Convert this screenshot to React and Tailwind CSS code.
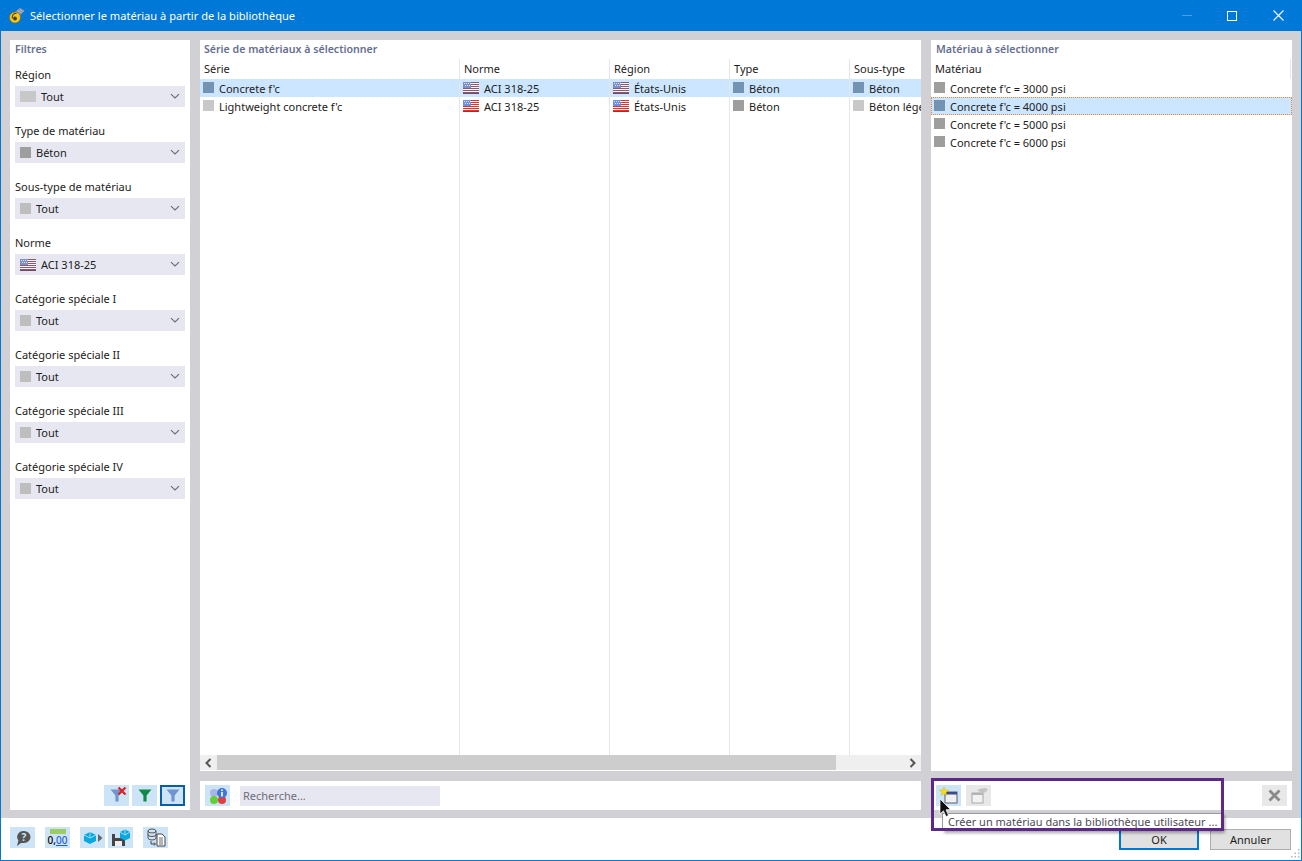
const font = { fontFamily: '"Noto Sans", "Open Sans", sans-serif' }

function Swatch({ color, className = '' }) {
  return <span className={`block w-[11px] h-[11px] shrink-0 ${className}`} style={{ background: color }} />
}

function Flag({ muted }) {
  const stripes = [0, 2, 4, 6, 8, 10]
  return (
    <svg width="16" height="12" viewBox="0 0 16 12" className="shrink-0 block">
      <rect width="16" height="12" fill="#f4f4f4" />
      {stripes.map((y) => <rect key={y} x="0" y={y} width="16" height="1" fill={muted ? '#8a5a72' : '#e0352f'} />)}
      <rect x="0" y="11" width="16" height="1" fill={muted ? '#6f4a66' : '#c8201c'} />
      <rect width="8" height="6" fill={muted ? '#7d8fc4' : '#6f8fe0'} />
      {[1, 3, 5, 7].map((x) => <rect key={x} x={x} y="1" width="1" height="1" fill="#dfe6fa" />)}
      {[2, 4, 6].map((x) => <rect key={x} x={x} y="3" width="1" height="1" fill="#dfe6fa" />)}
    </svg>
  )
}

function Chevron() {
  return (
    <svg width="12" height="7" viewBox="0 0 12 7" className="block">
      <path d="M2 1.2 L6 5 L10 1.2" fill="none" stroke="#6a6b73" strokeWidth="1.1" />
    </svg>
  )
}

function Filter({ label, value, icon }) {
  return (
    <div className="h-[56px]">
      <div className="h-[21px] pt-[2px] text-[11px] leading-[16px] text-[#1c1c20]">{label}</div>
      <div className="h-[21px] bg-[#e7e7f1] flex items-center pl-[5px] pr-[4px] text-[11px] text-[#1c1c20]">
        {icon}
        <span className="flex-1 pt-[2px]">{value}</span>
        <Chevron />
      </div>
    </div>
  )
}

const grey = <Swatch color="#bebebe" className="mr-[5px]" />

function Funnel({ color }) {
  return (
    <svg width="14" height="13" viewBox="0 0 14 13" className="block">
      <path d="M0.5 0.5 H13.5 L8.6 6.5 V12.5 H5.4 V6.5 Z" fill={color} />
    </svg>
  )
}

function ToolBtn({ children, active, className = '' }) {
  return (
    <div className={`w-[25px] h-[21px] flex items-center justify-center bg-[#cde4f7] ${active ? 'border-2 border-[#0a5ea8]' : ''} ${className}`}>
      {children}
    </div>
  )
}

function Cell({ w, border = true, children }) {
  return (
    <div className={`shrink-0 flex items-center h-full pl-[3px] gap-[5px] overflow-hidden whitespace-nowrap ${border ? 'border-r border-[#e6e6e6]' : ''}`} style={{ width: w }}>
      {children}
    </div>
  )
}

const cols = [260, 150, 120, 120, 72]

function SeriesRow({ selected, name, sw, type, sub, subColor, typeColor, muted }) {
  return (
    <div className={`flex h-[18px] text-[11px] text-[#1c1c20] ${selected ? 'bg-[#cce6ff]' : ''}`}>
      <Cell w={cols[0]}><Swatch color={sw} className="mb-[2px]" /><span className="pt-[2px]">{name}</span></Cell>
      <Cell w={cols[1]}><Flag muted={muted} /><span className="pt-[2px]">ACI 318-25</span></Cell>
      <Cell w={cols[2]}><Flag muted={muted} /><span className="pt-[2px]">États-Unis</span></Cell>
      <Cell w={cols[3]}><Swatch color={typeColor} className="mb-[2px]" /><span className="pt-[2px]">{type}</span></Cell>
      <Cell w={cols[4]} border={false}><Swatch color={subColor} className="mb-[2px]" /><span className="pt-[2px]">{sub}</span></Cell>
    </div>
  )
}

function Column({ w, label, border = true }) {
  return (
    <div className={`shrink-0 pl-[4px] h-full flex items-center text-[11px] text-[#1c1c20] ${border ? 'border-r border-[#e6e6e6]' : ''}`} style={{ width: w }}>
      {label}
    </div>
  )
}

export default function App() {
  const bodyLines = cols.slice(0, 4)
  return (
    <div style={font} className="w-[1302px] h-[861px] relative overflow-hidden bg-white border border-[#0078d7] border-t-0 flex flex-col">
      {/* title bar */}
      <div className="h-[31px] bg-[#0078d7] flex items-center shrink-0 ml-[-1px] mr-[-1px] text-white">
        <svg width="17" height="17" viewBox="0 0 17 17" className="ml-[8px] mr-[5px] block">
          <path d="M7 5 L12 1 L16.5 3.5 L12.5 8 Z" fill="#8a93a3" />
          <path d="M9 3.5 L14 6 M11 2 L15.5 4.5" stroke="#c9ced8" strokeWidth="0.6" />
          <circle cx="7" cy="10.5" r="5.5" fill="#f2c81e" stroke="#8a6a12" strokeWidth="0.7" />
          <circle cx="7" cy="11.5" r="1.9" fill="#4f3f10" />
          <path d="M8.5 6.5 C 5 6 4 8.5 4.4 11.5" stroke="#4f3f10" strokeWidth="1.1" fill="none" />
        </svg>
        <span className="text-[11.1px] pt-[2px]">Sélectionner le matériau à partir de la bibliothèque</span>
        <div className="ml-auto flex items-center">
          <div className="w-[10px] h-[1px] bg-[#4a9fe3] mr-[35px]" />
          <div className="w-[10px] h-[10px] border border-white mr-[36px]" />
          <svg width="11" height="11" viewBox="0 0 11 11" className="mr-[18px] block">
            <path d="M0.5 0.5 L10.5 10.5 M10.5 0.5 L0.5 10.5" stroke="#fff" strokeWidth="1.1" />
          </svg>
        </div>
      </div>

      {/* body */}
      <div className="h-[787px] shrink-0 bg-[#d1d0d4] flex gap-[10px] pt-[9px] pb-[8px] pl-[9px] pr-[9px]">
        {/* filters */}
        <div className="w-[180px] bg-white flex flex-col relative px-[5px]">
          <div className="h-[19px] text-[10.6px] font-semibold text-[#666f90] leading-[18px]">Filtres</div>
          <div className="mt-[6px]">
            <Filter label="Région" value="Tout" icon={<Swatch color="#c8c8c8" className="mr-[5px] !w-[16px]" />} />
            <Filter label="Type de matériau" value="Béton" icon={<Swatch color="#9e9e9e" className="mr-[5px]" />} />
            <Filter label="Sous-type de matériau" value="Tout" icon={grey} />
            <Filter label="Norme" value="ACI 318-25" icon={<span className="mr-[5px]"><Flag muted /></span>} />
            <Filter label="Catégorie spéciale I" value="Tout" icon={grey} />
            <Filter label="Catégorie spéciale II" value="Tout" icon={grey} />
            <Filter label="Catégorie spéciale III" value="Tout" icon={grey} />
            <Filter label="Catégorie spéciale IV" value="Tout" icon={grey} />
          </div>
          <div className="mt-auto mb-[4px] flex justify-end gap-[3px]">
            <ToolBtn>
              <div className="relative">
                <Funnel color="#6f94cf" />
                <svg width="10" height="10" viewBox="0 0 10 10" className="absolute top-[-3px] right-[-3px]">
                  <path d="M1.5 1.5 L8.5 8.5 M8.5 1.5 L1.5 8.5" stroke="#e02020" strokeWidth="2.2" />
                </svg>
              </div>
            </ToolBtn>
            <ToolBtn><Funnel color="#0e8a46" /></ToolBtn>
            <ToolBtn active><Funnel color="#6f94cf" /></ToolBtn>
          </div>
        </div>

        {/* series */}
        <div className="w-[721px] flex flex-col gap-[10px]">
          <div className="flex-1 bg-white flex flex-col relative overflow-hidden">
            <div className="h-[19px] pl-[4px] text-[10.6px] font-semibold text-[#666f90] leading-[18px]">Série de matériaux à sélectionner</div>
            <div className="h-[20px] flex">
              <Column w={cols[0]} label="Série" />
              <Column w={cols[1]} label="Norme" />
              <Column w={cols[2]} label="Région" />
              <Column w={cols[3]} label="Type" />
              <Column w={cols[4]} label="Sous-type" border={false} />
            </div>
            <SeriesRow selected name="Concrete f'c" sw="#7393b3" typeColor="#7393b3" type="Béton" subColor="#7393b3" sub="Béton" muted />
            <SeriesRow name="Lightweight concrete f'c" sw="#c8c8c8" typeColor="#9e9e9e" type="Béton" subColor="#c8c8c8" sub="Béton léger" />
            <div className="flex-1 flex">
              {bodyLines.map((w, i) => <div key={i} className="h-full border-r border-[#e6e6e6] shrink-0" style={{ width: w }} />)}
            </div>
            <div className="h-[15px] mb-[1px] bg-[#efefef] flex items-stretch shrink-0">
              <div className="w-[17px] flex items-center justify-center">
                <svg width="7" height="10" viewBox="0 0 7 10"><path d="M5.5 1 L1.5 5 L5.5 9" fill="none" stroke="#555" strokeWidth="2" /></svg>
              </div>
              <div className="w-[619px] bg-[#cdcdcd]" />
              <div className="flex-1" />
              <div className="w-[17px] flex items-center justify-center">
                <svg width="7" height="10" viewBox="0 0 7 10"><path d="M1.5 1 L5.5 5 L1.5 9" fill="none" stroke="#555" strokeWidth="2" /></svg>
              </div>
            </div>
          </div>
          <div className="h-[29px] bg-white flex items-center pl-[5px] gap-[10px] shrink-0">
            <ToolBtn>
              <svg width="20" height="18" viewBox="0 0 20 18" className="block">
                <circle cx="6" cy="6" r="4" fill="#a9b4e6" />
                <circle cx="6" cy="13" r="4" fill="#62cf3a" />
                <circle cx="14" cy="13" r="4" fill="#e04040" />
                <circle cx="14" cy="6" r="5" fill="#3f74d8" />
                <rect x="13.2" y="2.5" width="1.6" height="1.6" fill="#fff" />
                <rect x="13.2" y="5" width="1.6" height="4.5" fill="#fff" />
              </svg>
            </ToolBtn>
            <div className="w-[200px] h-[20px] bg-[#e7e7f1] flex items-center pl-[3px] pt-[2px] text-[11px] text-[#6d6d78]">Recherche...</div>
          </div>
        </div>

        {/* materials */}
        <div className="flex-1 flex flex-col gap-[10px]">
          <div className="flex-1 bg-white flex flex-col">
            <div className="h-[19px] pl-[5px] text-[10.6px] font-semibold text-[#666f90] leading-[18px]">Matériau à sélectionner</div>
            <div className="h-[20px] pl-[4px] flex items-center text-[11px] text-[#1c1c20] border-r border-[#e6e6e6] mr-[1px]">Matériau</div>
            {[3000, 4000, 5000, 6000].map((v) => (
              <div key={v} className={`h-[18px] flex items-center gap-[5px] pl-[2px] text-[11px] text-[#1c1c20] ${v === 4000 ? 'bg-[#cce6ff] border border-dotted border-[#e8873a]' : 'border border-transparent'}`}>
                <Swatch color={v === 4000 ? '#7393b3' : '#9e9e9e'} className="mb-[2px]" />
                <span className="pt-[2px]">Concrete f'c = {v} psi</span>
              </div>
            ))}
          </div>
          <div className="h-[29px] bg-white flex items-center pl-[5px] pr-[5px] gap-[5px] shrink-0">
            <div className="w-[25px] h-[21px] bg-[#cde4f7] flex items-center justify-center">
              <svg width="20" height="18" viewBox="0 0 20 18" className="block">
                <rect x="6" y="5" width="12" height="11" fill="#eef0f2" stroke="#5a5f68" />
                <rect x="6" y="5" width="12" height="2.5" fill="#3a4a8c" />
                <path d="M5 0 L6.3 3 L9.6 3.2 L7 5.3 L7.9 8.5 L5 6.8 L2.1 8.5 L3 5.3 L0.4 3.2 L3.7 3 Z" fill="#f7e018" stroke="#c8a810" strokeWidth="0.4" />
              </svg>
            </div>
            <div className="w-[25px] h-[21px] bg-[#e8e8e8] flex items-center justify-center">
              <svg width="20" height="18" viewBox="0 0 20 18" className="block">
                <rect x="3" y="6" width="11" height="10" fill="#f2f2f2" stroke="#a8a8a8" />
                <rect x="3" y="6" width="11" height="2" fill="#b4b4b4" />
                <path d="M8 3 L12 1.5 L17 1 L19 3 L15 6 L11 5 Z" fill="#c4c4c4" />
              </svg>
            </div>
            <div className="ml-auto w-[25px] h-[21px] bg-[#e8e8e8] flex items-center justify-center">
              <svg width="13" height="13" viewBox="0 0 13 13" className="block">
                <path d="M1.5 1.5 L11.5 11.5 M11.5 1.5 L1.5 11.5" stroke="#8a8a8a" strokeWidth="2.8" />
              </svg>
            </div>
          </div>
        </div>
      </div>

      {/* bottom bar */}
      <div className="flex-1 flex items-start pl-[9px] pr-[10px] relative">
        <div className="flex mt-[9px]">
          <ToolBtn>
            <svg width="18" height="18" viewBox="0 0 18 18" className="block">
              <path d="M10 2 A6.5 6 0 0 1 10 14 L7 14 L3 17 L4.4 11.5 A6.5 6 0 0 1 10 2 Z" fill="#555" />
              <text x="10" y="12" textAnchor="middle" fontSize="10" fontWeight="700" fill="#cde4f7" fontFamily="Noto Sans">?</text>
            </svg>
          </ToolBtn>
          <ToolBtn className="ml-[10px]">
            <div className="flex flex-col items-center w-[21px]">
              <div className="w-[16px] h-[5px] bg-[#9ccc65] mb-[1px]" />
              <div className="text-[10px] leading-[11px] font-medium text-black">0,<span className="text-[#1f5fd0] underline">00</span></div>
            </div>
          </ToolBtn>
          <ToolBtn className="ml-[10px]">
            <svg width="20" height="14" viewBox="0 0 20 14" className="block">
              <path d="M1 4 L7 1 L13 4 V10 L7 13 L1 10 Z" fill="#0aa8e0" />
              <path d="M7 1 V7 M1 4 L7 7 L13 4" stroke="#bfe8f7" fill="none" strokeWidth="0.8" />
              <path d="M15 3 L19.5 7 L15 11 Z" fill="#666" />
            </svg>
          </ToolBtn>
          <ToolBtn className="ml-[3px]">
            <svg width="20" height="18" viewBox="0 0 20 18" className="block">
              <rect x="1" y="5" width="13" height="12" fill="#444" />
              <rect x="4" y="5" width="7" height="4" fill="#cde4f7" />
              <rect x="4" y="12" width="7" height="5" fill="#eee" />
              <path d="M9 3 L14 0.5 L19 3 V9 L14 11.5 L9 9 Z" fill="#0aa8e0" />
              <path d="M14 0.5 V6 M9 3 L14 6 L19 3" stroke="#bfe8f7" fill="none" strokeWidth="0.8" />
            </svg>
          </ToolBtn>
          <ToolBtn className="ml-[10px]">
            <svg width="20" height="19" viewBox="0 0 20 19" className="block">
              <ellipse cx="6" cy="3" rx="4" ry="2" fill="none" stroke="#555" />
              <path d="M2 3 V10 A4 2 0 0 0 10 10 V3 M2 6.5 A4 2 0 0 0 10 6.5" fill="none" stroke="#555" />
              <path d="M5 13 V16 H9 M8 14.5 L9.5 16 L8 17.5" fill="none" stroke="#444" />
              <path d="M11 6 H16 L19 9 V18 H11 Z" fill="#fff" stroke="#444" />
              <path d="M13 10 H17 M13 12 H17 M13 14 H17 M13 16 H17" stroke="#444" strokeWidth="0.8" />
            </svg>
          </ToolBtn>
        </div>
        <div className="ml-auto flex gap-[11px] mt-[11px] text-[11px] text-[#1c1c20]">
          <div className="w-[80px] h-[21px] bg-[#e1e1e1] border-2 border-[#0078d7] flex items-center justify-center pt-[1px]">OK</div>
          <div className="w-[81px] h-[21px] bg-[#e1e1e1] border border-[#adadad] flex items-center justify-center pt-[1px]">Annuler</div>
        </div>
      </div>

      {/* window grip, tooltip, highlight and cursor sit on top */}
      <svg width="10" height="10" viewBox="0 0 10 10" className="absolute right-[1px] bottom-[1px] block">
        <path d="M8 0h1.5v1.5H8z M4.5 3.5H6V5H4.5z M8 3.5h1.5V5H8z M1 7h1.5v1.5H1z M4.5 7H6v1.5H4.5z M8 7h1.5v1.5H8z" fill="#b8b8b8" />
      </svg>
      <div className="absolute left-[941px] top-[813px] h-[18px] pl-[5px] pr-[5px] bg-white border border-[#9a9a9a] shadow-[2px_2px_3px_rgba(0,0,0,0.35)] flex items-center text-[11px] text-[#4c4c55] whitespace-nowrap">
        Créer un matériau dans la bibliothèque utilisateur ...
      </div>
      <div className="absolute left-[930px] top-[778px] w-[293px] h-[53px] border-[3px] border-[#5c2a86]" />
      <svg width="14" height="20" viewBox="0 0 14 20" className="absolute left-[938px] top-[798px] block">
        <path d="M1 1 V16 L4.5 12.8 L7 18.5 L9.5 17.4 L7 11.8 L11.5 11.5 Z" fill="#111" stroke="#fff" strokeWidth="0.7" />
      </svg>
    </div>
  )
}
